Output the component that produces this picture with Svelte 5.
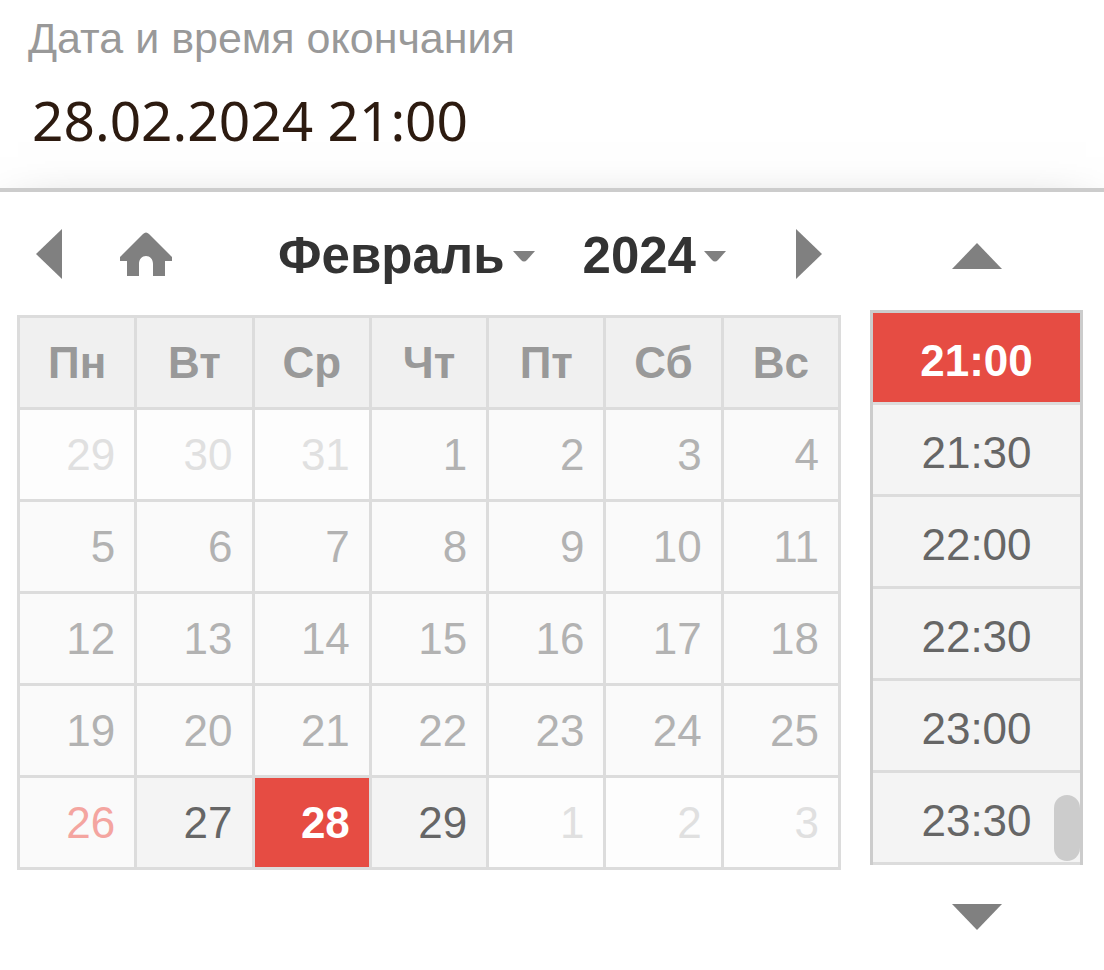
<script>
	const months = [
		'Январь', 'Февраль', 'Март', 'Апрель', 'Май', 'Июнь',
		'Июль', 'Август', 'Сентябрь', 'Октябрь', 'Ноябрь', 'Декабрь'
	];
	const years = [2023, 2024, 2025];
	const weekdays = ['Пн', 'Вт', 'Ср', 'Чт', 'Пт', 'Сб', 'Вс'];
	const times = ['21:00', '21:30', '22:00', '22:30', '23:00', '23:30'];
	const today = 26;

	let month = $state(1);
	let year = $state(2024);
	let day = $state(28);
	let time = $state('21:00');

	const pad = (n) => String(n).padStart(2, '0');

	let value = $derived(`${pad(day)}.${pad(month + 1)}.${year} ${time}`);
	let weeks = $derived(buildWeeks(year, month));

	function buildWeeks(y, m) {
		const offset = (new Date(y, m, 1).getDay() + 6) % 7;
		const count = Math.ceil((offset + new Date(y, m + 1, 0).getDate()) / 7);
		return Array.from({ length: count }, (_, w) =>
			Array.from({ length: 7 }, (_, d) => {
				const date = new Date(y, m, 1 - offset + w * 7 + d);
				return { n: date.getDate(), other: date.getMonth() !== m };
			})
		);
	}

	function shift(step) {
		const date = new Date(year, month + step, 1);
		month = date.getMonth();
		year = date.getFullYear();
	}

	function goHome() {
		month = 1;
		year = 2024;
	}

	function cellClass(cell) {
		if (cell.other) return 'other';
		if (cell.n === day) return 'current';
		if (cell.n === today) return 'past today';
		return cell.n < today ? 'past' : '';
	}
</script>

<div class="page">
	<div class="field">
		<label for="end-date">Дата и время окончания</label>
		<input id="end-date" type="text" {value} readonly />
	</div>

	<div class="picker">
		<div class="calendar">
			<div class="toolbar">
				<button class="icon" aria-label="Предыдущий месяц" onclick={() => shift(-1)}>
					<svg width="28" height="52" viewBox="0 0 28 52"><path d="M27 1v50L1 26z" /></svg>
				</button>
				<button class="icon home" aria-label="Сегодня" onclick={goHome}>
					<svg width="54" height="46" viewBox="0 0 54 46">
						<path d="M24 3Q27 0 30 3L53 26v4h-7v15H34V33c0-5-3-8-7-8s-7 3-7 8v12H8V30H1v-4z" />
					</svg>
				</button>
				<div class="choice month">
					<select aria-label="Месяц" bind:value={month}>
						{#each months as name, i}
							<option value={i}>{name}</option>
						{/each}
					</select>
					<svg width="22" height="12" viewBox="0 0 22 12"><path d="M0 1h22L14 10Q11 13 8 10z" /></svg>
				</div>
				<div class="choice">
					<select aria-label="Год" bind:value={year}>
						{#each years as y}
							<option value={y}>{y}</option>
						{/each}
					</select>
					<svg width="22" height="12" viewBox="0 0 22 12"><path d="M0 1h22L14 10Q11 13 8 10z" /></svg>
				</div>
				<button class="icon next" aria-label="Следующий месяц" onclick={() => shift(1)}>
					<svg width="28" height="52" viewBox="0 0 28 52"><path d="M1 1v50l26-25z" /></svg>
				</button>
			</div>

			<table>
				<thead>
					<tr>
						{#each weekdays as name}
							<th scope="col">{name}</th>
						{/each}
					</tr>
				</thead>
				<tbody>
					{#each weeks as week}
						<tr>
							{#each week as cell}
								<td class={cellClass(cell)}>
									<button disabled={cell.other} onclick={() => (day = cell.n)}>{cell.n}</button>
								</td>
							{/each}
						</tr>
					{/each}
				</tbody>
			</table>
		</div>

		<div class="timepicker">
			<button class="icon up" aria-label="Раньше">
				<svg width="52" height="28" viewBox="0 0 52 28"><path d="M1 27h50L26 1z" /></svg>
			</button>
			<div class="times">
				{#each times as t}
					<button class:current={t === time} onclick={() => (time = t)}>{t}</button>
				{/each}
				<span class="thumb"></span>
			</div>
			<button class="icon down" aria-label="Позже">
				<svg width="52" height="28" viewBox="0 0 52 28"><path d="M1 1h50L26 27z" /></svg>
			</button>
		</div>
	</div>
</div>

<style>
	:global(body) {
		margin: 0;
		background: #fff;
	}

	.page {
		display: flex;
		flex-direction: column;
		min-height: 100vh;
		overflow: hidden;
		font-family: 'Liberation Sans', Arial, sans-serif;
		font-size: 44px;
	}

	button,
	input,
	select {
		margin: 0;
		padding: 0;
		border: 0;
		background: none;
		color: inherit;
		font: inherit;
	}

	button {
		cursor: pointer;
	}

	svg {
		display: block;
		fill: #808080;
	}

	.field {
		display: flex;
		flex-direction: column;
		height: 188px;
		padding: 16px 28px 0;
		box-sizing: border-box;
	}

	label {
		color: #999;
		font-size: 43px;
		line-height: 44px;
	}

	input {
		margin-top: 19px;
		padding-left: 4px;
		height: 80px;
		color: #2d1b10;
		font-family: 'Noto Sans', 'Open Sans', sans-serif;
		font-size: 55px;
		outline: none;
	}

	.picker {
		display: flex;
		flex: 1;
		align-items: flex-start;
		gap: 29px;
		padding: 0 21px 32px 17px;
		border-top: 4px solid #ccc;
		background: #fff;
		box-shadow: 0 18px 55px -18px rgba(0, 0, 0, 0.5);
	}

	.calendar {
		flex: 1;
	}

	.toolbar {
		display: flex;
		align-items: center;
		height: 123px;
		padding: 0 18px;
	}

	.home {
		margin-left: 56px;
	}

	.choice {
		display: flex;
		align-items: center;
		gap: 8px;
		padding-top: 4px;
		color: #333;
		font-size: 51px;
		font-weight: 700;
	}

	.month {
		margin: 0 48px 0 auto;
	}

	select {
		appearance: none;
		field-sizing: content;
		height: 64px;
		cursor: pointer;
	}

	.next {
		margin-left: 69px;
	}

	table {
		width: 100%;
		border-collapse: collapse;
		table-layout: fixed;
	}

	th,
	td {
		height: 89px;
		padding: 0;
		border: 3px solid #dcdcdc;
		line-height: 88px;
	}

	th {
		background: #f0f0f0;
		color: #999;
		font-weight: 700;
	}

	td {
		background: #f4f4f4;
		color: #666;
	}

	td button {
		display: block;
		width: 100%;
		height: 88px;
		padding-right: 19px;
		text-align: right;
	}

	.past {
		background: #fafafa;
		color: #b2b2b2;
	}

	.today {
		color: #f4a5a0;
	}

	.other {
		background: #fdfdfd;
		color: #e0e0e0;
	}

	.current {
		background: #e64c43;
		color: #fff;
		font-weight: 700;
	}

	.timepicker {
		display: flex;
		flex-direction: column;
		align-items: center;
		width: 213px;
	}

	.up {
		padding: 50px 0 40px;
	}

	.down {
		padding: 38px 0 0;
	}

	.times {
		position: relative;
		width: 100%;
		box-sizing: border-box;
		border: 3px solid #ccc;
		border-bottom: 0;
		background: #f4f4f4;
		color: #666;
	}

	.times button {
		display: block;
		width: 100%;
		height: 92px;
		padding-top: 6px;
		border-bottom: 3px solid #dcdcdc;
	}

	.times .current {
		color: #fff;
	}

	.thumb {
		position: absolute;
		right: 0;
		bottom: 4px;
		width: 26px;
		height: 66px;
		border-radius: 13px;
		background: #ccc;
	}
</style>
